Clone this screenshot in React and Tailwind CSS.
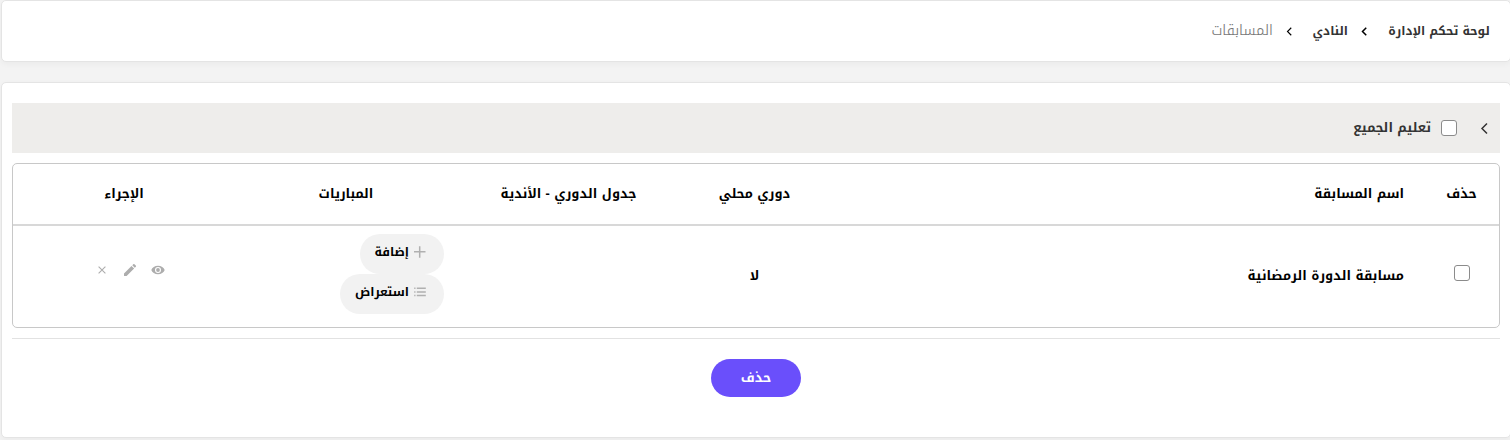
import React from "react";

function Chevron({ className }) {
  return (
    <svg viewBox="0 0 8 12" className={className} fill="none" stroke="currentColor">
      <path d="M7 1 2 6l5 5" />
    </svg>
  );
}

function Label({ className = "", children }) {
  return <span className={"inline-block shrink-0 whitespace-nowrap " + className}>{children}</span>;
}

function Checkbox() {
  return (
    <input
      type="checkbox"
      className="block size-4 shrink-0 appearance-none rounded-[3px] border border-[#8b8b8b] bg-white"
    />
  );
}

function PlusIcon() {
  return (
    <svg viewBox="0 0 12 12" className="size-3 shrink-0" stroke="#b0b0b0" strokeWidth="1.5" fill="none">
      <path d="M5.700 .2v11.500M0 5.800h11.500" />
    </svg>
  );
}

function ListIcon() {
  return (
    <svg viewBox="0 0 12 10" className="h-[10px] w-[12px] shrink-0" stroke="#b0b0b0" strokeWidth="1.500" fill="none">
      <path d="M2.800 1.200h9M2.800 4.900h9M2.800 8.600h9" />
      <path d="M.2 1.200h1.300M.2 4.900h1.300M.2 8.600h1.300" />
    </svg>
  );
}

function EyeIcon() {
  return (
    <svg viewBox="0 0 14 10" className="h-[10px] w-[14px]" fill="#adadad">
      <path
        fillRule="evenodd"
        d="M7 .8C3.800.8 1.200 2.400.3 5c.9 2.600 3.500 4.200 6.700 4.200s5.800-1.600 6.700-4.200C12.800 2.400 10.200.8 7 .8Zm0 7.200a3 3 0 1 1 0-6 3 3 0 0 1 0 6Z"
      />
      <circle cx="7" cy="5" r="1.900" />
    </svg>
  );
}

function PencilIcon() {
  return (
    <svg viewBox="0 0 12 12" className="size-3" fill="#adadad">
      <path d="M0 9.400 7.500 1.900 10.100 4.500 2.600 12H0ZM8.300 1.200 9.300.2a.8.8 0 0 1 1.100 0l1.400 1.400a.8.8 0 0 1 0 1.100l-1 1Z" />
    </svg>
  );
}

function CloseIcon() {
  return (
    <svg viewBox="0 0 8 8" className="size-2" stroke="#adadad" strokeWidth="1.1" fill="none">
      <path d="m.6.600 6.800 6.800M7.400.600.6 7.400" />
    </svg>
  );
}

const columns = "grid grid-cols-[74px_598px_144px_229px_216px_225px]";

export default function App() {
  return (
    <div
      dir="rtl"
      className="h-[440px] overflow-hidden bg-[#f3f3f3] pl-px font-['Noto_Kufi_Arabic','Noto_Sans_Arabic','DejaVu_Sans',sans-serif] text-[12px] leading-5 font-bold text-black"
    >
      <nav className="-mr-px flex h-[62px] items-center rounded-[5px] border border-[#e4e4e4] bg-white pr-5 text-[#333] shadow-[0_2px_6px_rgba(0,0,0,0.04)]">
        <Label className="w-[103px]">لوحة تحكم الإدارة</Label>
        <Chevron className="mr-5 h-[9px] w-[6px] stroke-2 text-black" />
        <Label className="mr-[13px] w-[36px]">النادي</Label>
        <Chevron className="mr-5 h-[9px] w-[6px] stroke-[1.5] text-black" />
        <Label className="mr-[13px] w-[62px] pb-0.5 text-[14.5px] font-light text-[#777]">المسابقات</Label>
      </nav>

      <main className="mt-5 -mr-px h-[356px] rounded-[5px] border border-[#e4e4e4] bg-white pt-5 pr-[10px] pl-[10px] shadow-[0_2px_6px_rgba(0,0,0,0.04)]">
        <div className="flex h-[50px] items-center bg-[#eeedeb] pr-3 text-[#333]">
          <Chevron className="h-[13px] w-[8px] stroke-[1.500]" />
          <div className="mr-[23px]">
            <Checkbox />
          </div>
          <Label className="mr-[10px] text-[13px]">تعليم الجميع</Label>
        </div>

        <section className="mt-[10px] h-[165px] rounded-[5px] border border-[#c8c8c8]">
          <div className={columns + " h-[62px] items-center border-b-2 border-[#d8d8d8] text-center text-[13px]"}>
            <Label className="pr-px">حذف</Label>
            <Label className="pr-[21px] text-right">اسم المسابقة</Label>
            <Label className="pr-px">دوري محلي</Label>
            <Label>جدول الدوري - الأندية</Label>
            <Label>المباريات</Label>
            <Label className="pr-[3px]">الإجراء</Label>
          </div>
          <div className={columns + " h-[101px]"}>
            <div className="flex justify-center pt-[39px]">
              <Checkbox />
            </div>
            <Label className="pt-[40px] pr-[21px] text-[13px]">مسابقة الدورة الرمضانية</Label>
            <Label className="pt-[40px] pr-px text-center text-[13px]">لا</Label>
            <div />
            <div className="flex flex-col items-start pt-2 pr-[10px]">
              <button className="flex h-10 w-[84px] items-center rounded-full bg-[#f2f2f2] pr-[18.5px] pb-1">
                <PlusIcon />
                <Label className="mr-[4.5px]">إضافة</Label>
              </button>
              <button className="flex h-10 w-[104px] items-center rounded-full bg-[#f2f2f2] pr-[18.5px] pb-1">
                <ListIcon />
                <Label className="mr-[4.5px]">استعراض</Label>
              </button>
            </div>
            <div className="flex h-[88px] items-center pr-[73px]">
              <EyeIcon />
              <div className="mr-[15px] ml-[18px]">
                <PencilIcon />
              </div>
              <CloseIcon />
            </div>
          </div>
        </section>

        <div className="mt-[10px] flex justify-center border-t border-[#e2e2e2] pt-5">
          <button className="h-[38px] w-[90px] rounded-full bg-[#6a4ffb] text-[13px] text-white">حذف</button>
        </div>
      </main>
    </div>
  );
}
